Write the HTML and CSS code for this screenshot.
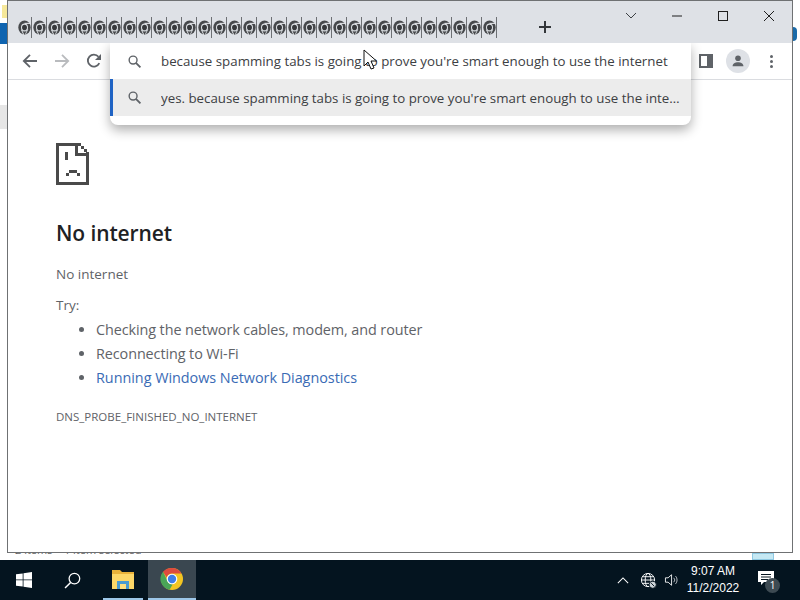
FILE: index.html
```html
<!DOCTYPE html>
<html lang="en">
<head>
<meta charset="utf-8">
<title>No internet</title>
<link rel="stylesheet" href="styles.css">
</head>
<body>
<svg class="defs" width="0" height="0" aria-hidden="true">
  <defs>
    <symbol id="gtab" viewBox="0 0 16 16" preserveAspectRatio="none">
      <circle cx="8" cy="8" r="7.600" fill="#46484b"/>
      <circle cx="8" cy="8" r="4.300" fill="#dfe2e6"/>
      <path d="M8 3.600h7.500" stroke="#dfe2e6" stroke-width="1.200" fill="none"/>
      <path d="M4.200 10.500l3 5.500" stroke="#dfe2e6" stroke-width="1.100" fill="none"/>
      <path d="M12 10l-3 5.500" stroke="#dfe2e6" stroke-width="1" fill="none"/>
      <circle cx="8" cy="8" r="3" fill="#37393c"/>
    </symbol>
    <symbol id="mag" viewBox="0 0 16 16">
      <circle cx="6.500" cy="6.500" r="4.200" fill="none" stroke="#5f6368" stroke-width="1.500"/>
      <path d="M9.500 9.500l4.800 4.800" stroke="#5f6368" stroke-width="1.900"/>
    </symbol>
  </defs>
</svg>
<div class="desktop">
  <div class="peek peek-yellow"></div>
  <div class="peek peek-blue"></div>
  <div class="peek peek-grey"></div>
  <div class="peek peek-dot"></div>
  <div class="peek peek-thumb"></div>
  <div class="peek peek-text">2 items &nbsp; &nbsp;1 item selected</div>

  <main class="window">
    <header class="titlebar">
      <div class="tabs">
        <span class="tab"><svg class="tab-icon"><use href="#gtab"/></svg></span><span class="tab"><svg class="tab-icon"><use href="#gtab"/></svg></span><span class="tab"><svg class="tab-icon"><use href="#gtab"/></svg></span><span class="tab"><svg class="tab-icon"><use href="#gtab"/></svg></span><span class="tab"><svg class="tab-icon"><use href="#gtab"/></svg></span><span class="tab"><svg class="tab-icon"><use href="#gtab"/></svg></span><span class="tab"><svg class="tab-icon"><use href="#gtab"/></svg></span><span class="tab"><svg class="tab-icon"><use href="#gtab"/></svg></span>
        <span class="tab"><svg class="tab-icon"><use href="#gtab"/></svg></span><span class="tab"><svg class="tab-icon"><use href="#gtab"/></svg></span><span class="tab"><svg class="tab-icon"><use href="#gtab"/></svg></span><span class="tab"><svg class="tab-icon"><use href="#gtab"/></svg></span><span class="tab"><svg class="tab-icon"><use href="#gtab"/></svg></span><span class="tab"><svg class="tab-icon"><use href="#gtab"/></svg></span><span class="tab"><svg class="tab-icon"><use href="#gtab"/></svg></span><span class="tab"><svg class="tab-icon"><use href="#gtab"/></svg></span>
        <span class="tab"><svg class="tab-icon"><use href="#gtab"/></svg></span><span class="tab"><svg class="tab-icon"><use href="#gtab"/></svg></span><span class="tab"><svg class="tab-icon"><use href="#gtab"/></svg></span><span class="tab"><svg class="tab-icon"><use href="#gtab"/></svg></span><span class="tab"><svg class="tab-icon"><use href="#gtab"/></svg></span><span class="tab"><svg class="tab-icon"><use href="#gtab"/></svg></span><span class="tab"><svg class="tab-icon"><use href="#gtab"/></svg></span><span class="tab"><svg class="tab-icon"><use href="#gtab"/></svg></span>
        <span class="tab"><svg class="tab-icon"><use href="#gtab"/></svg></span><span class="tab"><svg class="tab-icon"><use href="#gtab"/></svg></span><span class="tab"><svg class="tab-icon"><use href="#gtab"/></svg></span><span class="tab"><svg class="tab-icon"><use href="#gtab"/></svg></span><span class="tab"><svg class="tab-icon"><use href="#gtab"/></svg></span><span class="tab"><svg class="tab-icon"><use href="#gtab"/></svg></span><span class="tab"><svg class="tab-icon"><use href="#gtab"/></svg></span><span class="tab"><svg class="tab-icon"><use href="#gtab"/></svg></span>
      </div>
      <svg class="newtab" viewBox="0 0 14 14"><path d="M7 1v12M1 7h12" stroke="#33363a" stroke-width="2"/></svg>
      <div class="caption">
        <svg class="cap cap-chev" viewBox="0 0 12 12"><path d="M1 3l5 5 5-5" fill="none" stroke="#3c4043" stroke-width="1"/></svg>
        <svg class="cap cap-min" viewBox="0 0 12 12"><path d="M1 6h10" stroke="#1f1f1f" stroke-width="1"/></svg>
        <svg class="cap cap-max" viewBox="0 0 12 12"><rect x="1.500" y="1.500" width="9" height="9" fill="none" stroke="#1f1f1f" stroke-width="1"/></svg>
        <svg class="cap cap-close" viewBox="0 0 12 12"><path d="M1 1l10 10M11 1L1 11" stroke="#1f1f1f" stroke-width="1"/></svg>
      </div>
    </header>

    <nav class="toolbar">
      <svg class="nav nav-back" viewBox="0 0 16 16"><path d="M15 8H2M8 1.800L1.800 8 8 14.200" fill="none" stroke="#5f6368" stroke-width="1.800"/></svg>
      <svg class="nav nav-fwd" viewBox="0 0 16 16"><path d="M1 8h13M8 1.800L14.200 8 8 14.200" fill="none" stroke="#b9bbbe" stroke-width="1.800"/></svg>
      <svg class="nav nav-reload" viewBox="0 0 16 16"><path d="M13.300 10.200A6 6 0 1 1 12.500 3.800" fill="none" stroke="#5f6368" stroke-width="1.800"/><path d="M15 1v6H9z" fill="#5f6368"/></svg>
      <div class="tool-right">
        <svg class="sidepanel" viewBox="0 0 14 14"><rect x="1" y="1" width="12" height="12" fill="none" stroke="#5f6368" stroke-width="2"/><rect x="8" y="1" width="5" height="12" fill="#5f6368"/></svg>
        <span class="avatar"><svg viewBox="0 0 16 16" class="avatar-icon"><circle cx="8" cy="4.800" r="3.200" fill="#5f6368"/><path d="M1.800 14c0-3.400 3-4.600 6.200-4.600s6.200 1.200 6.200 4.600z" fill="#5f6368"/></svg></span>
        <span class="kebab"><i></i><i></i><i></i></span>
      </div>
    </nav>

    <section class="page">
      <svg class="sad" viewBox="0 0 33 42" shape-rendering="crispEdges">
        <path fill="#4a4a4a" d="M0 0h22v3H3v36h27V13h3v29H0z"/>
        <path fill="#4a4a4a" d="M22 0h3v3h3v3h3v3h2v4H19V3h3v7h8V9h-2V6h-3V3h-3z"/>
        <path fill="#4a4a4a" d="M9 9h3v8H9zM10 30h3v-3h8v3h3v3h-3v-3h-8v3h-3z"/>
      </svg>
      <h1>No internet</h1>
      <p class="sub">No internet</p>
      <p class="try">Try:</p>
      <ul>
        <li>Checking the network cables, modem, and router</li>
        <li>Reconnecting to Wi-Fi</li>
        <li><a href="#">Running Windows Network Diagnostics</a></li>
      </ul>
      <p class="code">DNS_PROBE_FINISHED_NO_INTERNET</p>
    </section>

    <div class="omni">
      <div class="omni-row omni-input">
        <svg class="mag"><use href="#mag"/></svg>
        <span>because spamming tabs is going to prove you're smart enough to use the internet</span>
      </div>
      <div class="omni-row omni-sel">
        <svg class="mag"><use href="#mag"/></svg>
        <span class="ell">yes. because spamming tabs is going to prove you're smart enough to use the internet</span>
      </div>
    </div>
  </main>

  <svg class="cursor" viewBox="0 0 14 22"><path d="M1 1v16l4-4 3 7 3-1-3-7h5.500z" fill="#fff" stroke="#111" stroke-width="1"/></svg>
</div>

<footer class="taskbar">
  <svg class="tb-win" viewBox="0 0 16 16"><path fill="#fff" d="M0 2.300l6.700-.9v6.100H0zM7.500 1.300L16 0v7.500H7.500zM0 8.300h6.700v6.200L0 13.700zM7.500 8.300H16V16l-8.500-1.200z"/></svg>
  <svg class="tb-search" viewBox="0 0 16 16"><circle cx="9.800" cy="6.200" r="5" fill="none" stroke="#fff" stroke-width="1.200"/><path d="M6.200 9.800L1 15" stroke="#fff" stroke-width="1.400"/></svg>
  <div class="tb-app tb-folder">
    <svg viewBox="0 0 22 20" class="folder"><path fill="#e8b23a" d="M0 1h8l2 2h12v4H0z"/><path fill="#fcd768" d="M0 5h22v15H0z"/><path fill="#4a9bd1" d="M5 12h12v8H5z"/><path fill="#ffdf80" d="M8 15h6v5H8z"/></svg>
  </div>
  <div class="tb-app tb-chrome">
    <svg viewBox="0 0 24 24" class="chrome">
      <circle cx="12" cy="12" r="11" fill="#f2c522"/>
      <path d="M12 1a11 11 0 0 1 9.500 5.500H12a5.500 5.500 0 0 0-5.300 4L3 4.800A11 11 0 0 1 12 1z" fill="#dd4b3e"/>
      <path d="M3 4.800l4.800 9.600a5.500 5.500 0 0 0 4.800 3L9.500 22.700A11 11 0 0 1 3 4.800z" fill="#4aa557"/>
      <circle cx="12" cy="12" r="5.300" fill="#fff"/>
      <circle cx="12" cy="12" r="4.200" fill="#3f7ee8"/>
    </svg>
  </div>
  <div class="tray">
    <svg class="tr-chev" viewBox="0 0 14 8"><path d="M1 7l6-6 6 6" fill="none" stroke="#fff" stroke-width="1.200"/></svg>
    <svg class="tr-globe" viewBox="0 0 18 18"><g fill="none" stroke="#fff" stroke-width="1"><circle cx="8.500" cy="8.500" r="7"/><ellipse cx="8.500" cy="8.500" rx="3" ry="7"/><path d="M1.500 8.500h14M2.500 5h12M2.500 12h12"/></g><circle cx="13.500" cy="13.500" r="3.800" fill="#cfd4d8" stroke="#04141f"/><path d="M11.800 11.800l3.400 3.400" stroke="#04141f"/></svg>
    <svg class="tr-vol" viewBox="0 0 17 16"><path d="M1 5.500h3L8 2v12l-4-3.500H1z" fill="none" stroke="#fff"/><path d="M10.500 5.500a3.500 3.500 0 0 1 0 5M12.500 3.500a6.500 6.500 0 0 1 0 9" fill="none" stroke="#c8ccd0"/></svg>
    <div class="clock"><span>9:07 AM</span><span>11/2/2022</span></div>
    <div class="notif">
      <svg viewBox="0 0 16 14" class="notif-icon"><path fill="#fff" d="M0 0h16v11H6l-3 3v-3H0z"/><path stroke="#04141f" d="M3 3.500h10M3 6h10M3 8.500h7"/></svg>
      <span class="badge">1</span>
    </div>
  </div>
</footer>
</body>
</html>
```

FILE: styles.css
```css
* { box-sizing: border-box; }
html, body { margin: 0; height: 100%; overflow: hidden; }
body {
  width: 800px;
  height: 600px;
  display: flex;
  flex-direction: column;
  background: #fff;
  font-family: "Open Sans", "Noto Sans", sans-serif;
  color: #4a4a4a;
}
.defs { position: absolute; }

/* desktop canvas */
.desktop { position: relative; height: 560px; background: #fff; overflow: hidden; }
.peek { position: absolute; }
.peek-yellow { left: 2px; top: 5px; width: 5px; height: 13px; background: #f6e89a; }
.peek-blue { left: 0; top: 23px; width: 7px; height: 21px; background: #0f64b0; }
.peek-grey { left: 0; top: 105px; width: 7px; height: 24px; background: #e6e6e6; }
.peek-dot { left: 793px; top: 27px; width: 4px; height: 14px; border-radius: 0 7px 7px 0; background: #1a6aa8; }
.peek-thumb { left: 752px; top: 553px; width: 22px; height: 7px; background: #c5e8f3; border: 1px solid #8fc9e2; }
.peek-text { left: 15px; top: 543px; font-size: 11px; color: #666; white-space: nowrap; line-height: 13px; }

/* browser window */
.window {
  position: absolute;
  left: 7px;
  top: 0;
  width: 786px;
  height: 553px;
  border: 1px solid #6f7173;
  background: #fff;
  display: flex;
  flex-direction: column;
}
.titlebar {
  height: 42px;
  flex: none;
  background: #dee1e6;
  display: flex;
  align-items: center;
  position: relative;
  padding: 10px 0 0 9px;
}
.tabs { display: flex; width: 480px; flex: none; }
.tab {
  width: 15px;
  height: 21px;
  border-right: 1px solid #6d7074;
  display: flex;
  align-items: center;
  justify-content: center;
  flex: none;
}
.tab-icon { width: 13px; height: 15px; }
.newtab { width: 14px; height: 14px; margin-left: 41px; flex: none; }
.caption { position: absolute; left: 0; top: 0; right: 0; height: 30px; display: flex; align-items: center; padding: 0 0 0 617px; }
.cap { width: 12px; height: 12px; flex: none; }
.cap-min { margin-left: 34px; }
.cap-max { margin-left: 34px; }
.cap-close { margin-left: 34px; }

.toolbar {
  height: 37px;
  flex: none;
  background: #fff;
  border-bottom: 1px solid #dadce0;
  display: flex;
  align-items: center;
  padding-left: 14px;
}
.nav { width: 16px; height: 16px; flex: none; }
.nav-fwd { margin-left: 16px; }
.nav-reload { margin-left: 16px; }
.tool-right { margin-left: auto; display: flex; align-items: center; padding-right: 19px; }
.sidepanel { width: 14px; height: 14px; }
.avatar {
  width: 24px;
  height: 24px;
  margin-left: 13px;
  border-radius: 50%;
  background: #dee1e6;
  display: flex;
  align-items: center;
  justify-content: center;
}
.avatar-icon { width: 14px; height: 14px; }
.kebab { margin-left: 20px; width: 3px; display: flex; flex-direction: column; gap: 2px; }
.kebab i { width: 3px; height: 3px; border-radius: 50%; background: #5f6368; display: block; }

/* error page */
.page { flex: 1; padding: 63px 0 0 48px; background: #fff; }
.sad { display: block; width: 33px; height: 42px; }
h1 { margin: 32px 0 0; font-size: 21px; line-height: 32px; font-weight: 600; color: #202124; letter-spacing: -0.1px; }
.sub { margin: 15px 0 0; font-size: 13.500px; line-height: 20px; color: #5f6368; }
.try { margin: 11px 0 0; font-size: 13.500px; line-height: 20px; color: #5f6368; }
ul { margin: 3px 0 0; padding: 0 0 0 40px; list-style: disc; }
li { font-size: 14.400px; line-height: 24px; color: #5f6368; letter-spacing: -0.09px; }
a { color: #3a6bb5; text-decoration: none; letter-spacing: -0.03px; }
.code { margin: 18px 0 0; font-size: 11.500px; line-height: 18px; color: #5f6368; }

/* omnibox popup */
.omni {
  position: absolute;
  left: 102px;
  top: 42px;
  width: 581px;
  height: 82px;
  background: #fff;
  border-radius: 0 0 8px 8px;
  box-shadow: 0 5px 12px rgba(0, 0, 0, 0.32);
  clip-path: inset(0 -12px -20px -12px);
  z-index: 2;
}
.omni-row {
  display: flex;
  align-items: center;
  padding-left: 17px;
  font-size: 13.300px;
  color: #3c4043;
  white-space: nowrap;
}
.omni-input { height: 36px; }
.omni-sel {
  height: 37px;
  background: #ececec;
  border-left: 3px solid #1f63c4;
  padding-left: 14px;
}
.mag { width: 15px; height: 15px; flex: none; margin-right: 19px; }
.ell { overflow: hidden; text-overflow: ellipsis; width: 521px; }

.cursor { position: absolute; left: 363px; top: 49px; width: 14px; height: 22px; z-index: 3; }

/* taskbar */
.taskbar {
  height: 40px;
  flex: none;
  background: #04141f;
  display: flex;
  align-items: center;
  position: relative;
}
.tb-win { width: 16px; height: 16px; margin-left: 16px; flex: none; }
.tb-search { width: 17px; height: 17px; margin-left: 32px; flex: none; }
.tb-app { height: 40px; display: flex; align-items: center; justify-content: center; flex: none; border-bottom: 2px solid #9dc7e8; }
.tb-folder { margin-left: 22px; width: 40px; }
.tb-chrome { margin-left: 5px; width: 48px; background: #3a4750; }
.folder { width: 22px; height: 20px; }
.chrome { width: 24px; height: 24px; }
.tray { margin-left: auto; display: flex; align-items: center; color: #fff; padding-right: 22px; }
.tr-chev { width: 12px; height: 7px; }
.tr-globe { width: 17px; height: 17px; margin-left: 11px; }
.tr-vol { width: 16px; height: 14px; margin-left: 7px; }
.clock {
  margin-left: 2px;
  width: 62px;
  display: flex;
  flex-direction: column;
  align-items: center;
  font-family: "Liberation Sans", Arial, sans-serif;
  font-size: 12px;
  line-height: 17px;
  color: #fff;
}
.notif { position: relative; margin-left: 14px; width: 20px; height: 22px; }
.notif-icon { width: 16px; height: 14px; display: block; margin-top: 2px; }
.badge {
  position: absolute;
  left: 7px;
  top: 9px;
  width: 15px;
  height: 15px;
  border-radius: 50%;
  background: #3d4a52;
  font-size: 10px;
  line-height: 15px;
  text-align: center;
  color: #fff;
}
```
